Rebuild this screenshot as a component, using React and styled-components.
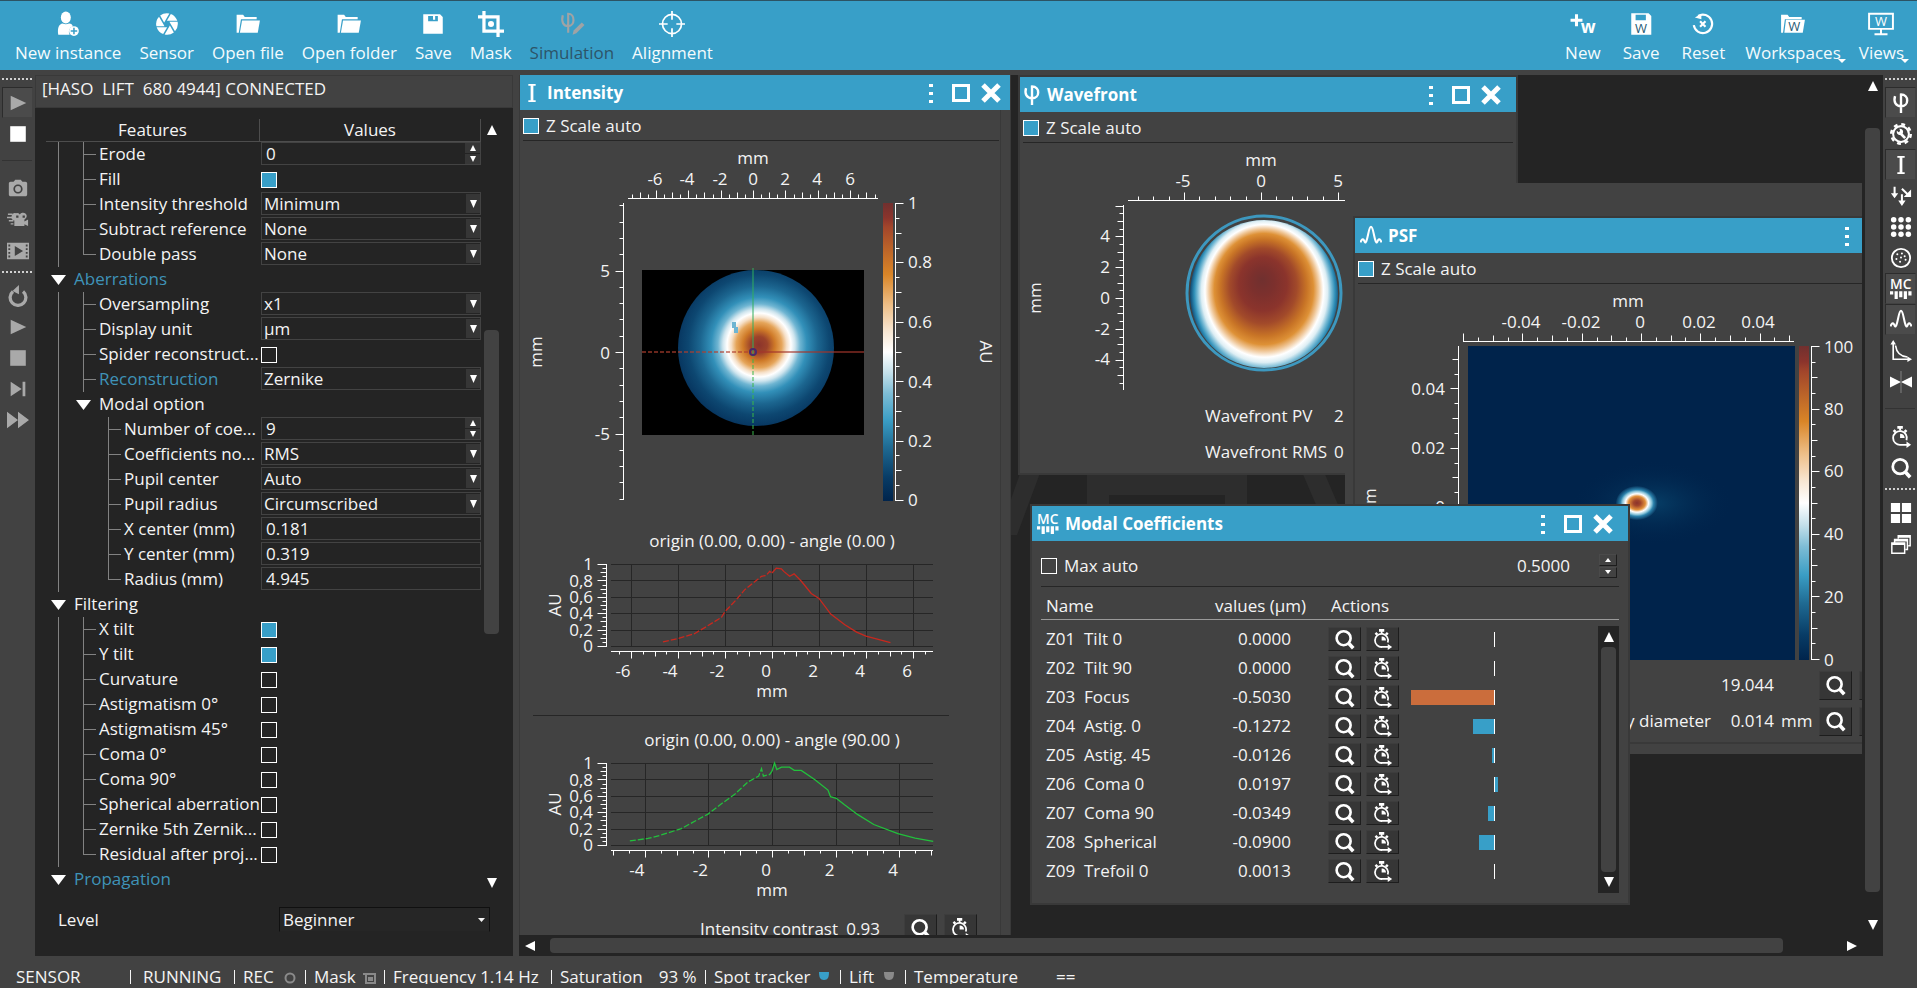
import React from "react";
import styled, { createGlobalStyle, css } from "styled-components";
import { MdCamera, MdPhotoCamera } from "react-icons/md";

const blue = "#389fc8";
const panel = "#424242";
const dark = "#242424";
const edge = "#393939";
const grey = "#a9a9a9";

const Global = createGlobalStyle`
  *, *::before, *::after { box-sizing: border-box; }
  body { margin: 0; background: ${panel}; color: #f4f4f4; overflow: hidden; }
  body, button, input, select { font: 17px/22px "Open Sans", "Noto Sans", sans-serif; }
  svg text { font: 17px "Open Sans", "Noto Sans", sans-serif; fill: #f4f4f4; }
`;

/* ---------- shell ---------- */

const Shell = styled.div`
  display: flex;
  flex-direction: column;
  height: 100vh;
  background: ${panel};
`;

const TopBar = styled.header`
  display: flex;
  justify-content: space-between;
  height: 70px;
  padding: 0 4px 0 6px;
  background: ${blue};
  border-top: 1px solid #2c5364;
`;

const ToolGroup = styled.div`
  display: flex;
`;

const ToolButton = styled.button`
  position: relative;
  display: flex;
  flex-direction: column;
  align-items: center;
  gap: 5px;
  padding: 10px ${(p) => (p.$wide ? 11 : 9)}px 0;
  border: 0;
  background: none;
  color: #f4fbfd;
  white-space: nowrap;

  svg { width: 26px; height: 26px; color: #fff; }
  svg text { fill: currentColor; }
  &:disabled { color: #2d5468; }
  &:disabled svg { color: #9fa3a5; }
`;

const MenuMark = styled.span`
  position: absolute;
  right: 4px;
  bottom: 7px;
  border: 4px solid transparent;
  border-top-color: #fff;
  border-bottom: 0;
`;

const Main = styled.main`
  display: flex;
  flex: 1;
  min-height: 0;
  padding-top: 5px;
`;

const SideBar = styled.nav`
  display: flex;
  flex-direction: column;
  flex: none;
  width: ${(p) => p.$width}px;
  padding-left: 2px;
`;

const Dots = styled.div`
  flex: none;
  height: ${(p) => (p.$top ? 12 : 14)}px;
  width: 31px;
  background: repeating-linear-gradient(90deg, #d0d0d0 0 2px, transparent 2px 4px) 0 ${(p) => (p.$top ? 3 : 5)}px / 100% 2px no-repeat;
`;

const SideRule = styled.hr`
  flex: none;
  width: 30px;
  margin: 11px 0 12px;
  border: 0;
  border-top: 1px solid #333;
`;

const SideButton = styled.button`
  display: grid;
  place-items: center;
  flex: none;
  width: 31px;
  height: 31px;
  padding: 0;
  border: 1px solid transparent;
  background: none;
  color: ${(p) => p.$color || "#fff"};
  ${(p) =>
    p.$pressed &&
    css`
      border-color: #2c2c2c #424242 #424242 #2c2c2c;
      background: #4b4b4b;
    `}
  svg { width: 22px; height: 22px; }
  svg text { fill: currentColor; }
`;

/* ---------- shared controls ---------- */

const Check = styled.input.attrs({ type: "checkbox" })`
  appearance: none;
  flex: none;
  width: 16px;
  height: 16px;
  margin: 0;
  border: 1px solid #fff;
  &:checked { background: ${blue}; }
`;

const ScrollTrack = styled.div`
  display: flex;
  flex-direction: ${(p) => (p.$row ? "row" : "column")};
  justify-content: space-between;
  align-items: center;
  flex: none;
  ${(p) => (p.$row ? "height: 21px;" : "width: 21px;")}
  background: ${dark};
`;

const Thumb = styled.div`
  border-radius: 4px;
  background: ${panel};
  ${(p) => (p.$row ? "height: 15px;" : "width: 15px;")}
  flex: ${(p) => p.$size} 1 0;
`;

const Slack = styled.div`
  flex: ${(p) => p.$size} 1 0;
`;

const ArrowButton = styled.button`
  display: grid;
  place-items: center;
  flex: none;
  width: 21px;
  height: 21px;
  padding: 0;
  border: 0;
  background: none;
  color: #fff;
`;

const turns = { up: 0, right: 90, down: 180, left: 270 };
const Triangle = ({ dir = "down", w = 10, h = 10 }) => (
  <svg width={w} height={h} viewBox="0 0 10 10" preserveAspectRatio="none" aria-hidden="true">
    <path d="M5 0 10 10H0z" fill="currentColor" transform={`rotate(${turns[dir]} 5 5)`} />
  </svg>
);

const SmallButton = styled.button`
  display: inline-grid;
  place-items: center;
  flex: none;
  width: 33px;
  height: ${(p) => p.$h || 29}px;
  padding: 0;
  border: 1px solid;
  border-color: #3d3d3d #1d1d1d #1d1d1d #3d3d3d;
  background: #363636;
  color: #fff;
  svg { width: 21px; height: 21px; }
`;

/* ---------- feature panel ---------- */

const FeaturePanel = styled.section`
  display: flex;
  flex-direction: column;
  flex: none;
  width: 478px;
  margin-right: 6px;
  background: ${dark};
`;

const PanelTitle = styled.h1`
  height: 33px;
  margin: 0;
  padding: 2px 6px;
  border: 1px solid ${edge};
  background: ${panel};
  font-size: 17px;
  font-weight: 400;
  white-space: pre;
`;

const PanelBody = styled.div`
  display: flex;
  flex: none;
  padding: 11px 11px 0 11px;
  height: 785px;
`;

const Features = styled.div`
  flex: 1;
  overflow: hidden;
`;

const FeatureHead = styled.div`
  display: grid;
  grid-template-columns: 214px minmax(0, 1fr);
  height: 23px;
  border-bottom: 1px solid #4d4d4d;
  text-align: center;
  span { border-right: 1px solid #4d4d4d; }
`;

const FeatureRow = styled.div`
  display: grid;
  grid-template-columns: 215px minmax(0, 1fr);
  align-items: center;
  height: 25px;
`;

const Branch = styled.div`
  display: flex;
  height: 25px;
  color: ${(p) => (p.$accent ? "#3f93b8" : "inherit")};
  white-space: nowrap;
  label, b { font-weight: 400; line-height: 24px; margin-left: 3px; }
`;

const Guide = styled.span`
  position: relative;
  flex: none;
  width: 25px;
  &::before {
    content: "";
    position: absolute;
    left: 12px;
    top: 0;
    width: 1px;
    height: ${(p) => (p.$kind === "end" ? 13 : 25)}px;
    background: #828282;
  }
  &::after {
    content: "";
    position: absolute;
    left: 12px;
    top: 12px;
    width: ${(p) => (p.$kind === "line" ? 0 : 13)}px;
    height: 1px;
    background: #828282;
  }
`;

const Toggle = styled.button`
  display: grid;
  place-items: center;
  flex: none;
  width: 25px;
  padding: 0;
  border: 0;
  background: none;
  color: #fff;
`;

const Field = styled.div`
  position: relative;
  display: flex;
  height: 23px;
  border: 1px solid #434343;
  align-self: start;
  input, select {
    appearance: none;
    flex: 1;
    min-width: 0;
    height: 21px;
    padding: 0 ${(p) => (p.$select ? 2 : 4)}px;
    border: 0;
    background: none;
    color: inherit;
    outline: 0;
  }
`;

const DropMark = styled.span`
  position: absolute;
  right: 0;
  top: 1px;
  display: grid;
  place-items: center;
  width: 14px;
  height: 19px;
  background: #363636;
  color: #fff;
  pointer-events: none;
`;

const Spin = styled.span`
  display: flex;
  flex-direction: column;
  flex: none;
  gap: 1px;
  width: ${(p) => p.$w || 15}px;
  button {
    flex: 1;
    display: grid;
    place-items: center;
    padding: 0;
    border: 0;
    background: #363636;
    color: #fff;
    ${(p) => p.$raised && "border: 1px solid; border-color: #4a4a4a #1d1d1d #1d1d1d #4a4a4a; background: #424242;"}
  }
`;

const LevelRow = styled.div`
  display: flex;
  justify-content: space-between;
  align-items: center;
  margin-top: 14px;
  padding: 0 23px;
`;

const LevelBox = styled.div`
  position: relative;
  width: 211px;
  select {
    appearance: none;
    width: 100%;
    height: 25px;
    padding: 0 3px;
    border: 1px solid #101010;
    border-bottom-color: ${dark};
    border-radius: 0;
    background: #262626;
    color: inherit;
    outline: 0;
  }
  svg { position: absolute; right: 5px; top: 11px; pointer-events: none; }
`;

const rows = [
  { t: "Erode", g: "lb", k: "spin", v: "0" },
  { t: "Fill", g: "lb", k: "check", v: true },
  { t: "Intensity threshold", g: "lb", k: "select", v: "Minimum" },
  { t: "Subtract reference", g: "lb", k: "select", v: "None" },
  { t: "Double pass", g: "le", k: "select", v: "None" },
  { t: "Aberrations", g: "t", accent: true },
  { t: "Oversampling", g: "lb", k: "select", v: "x1" },
  { t: "Display unit", g: "lb", k: "select", v: "µm" },
  { t: "Spider reconstruct...", g: "lb", k: "check", v: false },
  { t: "Reconstruction", g: "lb", k: "select", v: "Zernike", accent: true },
  { t: "Modal option", g: "lt" },
  { t: "Number of coe...", g: "lsb", k: "spin", v: "9" },
  { t: "Coefficients no...", g: "lsb", k: "select", v: "RMS" },
  { t: "Pupil center", g: "lsb", k: "select", v: "Auto" },
  { t: "Pupil radius", g: "lsb", k: "select", v: "Circumscribed" },
  { t: "X center (mm)", g: "lsb", k: "text", v: "0.181" },
  { t: "Y center (mm)", g: "lsb", k: "text", v: "0.319" },
  { t: "Radius (mm)", g: "lse", k: "text", v: "4.945" },
  { t: "Filtering", g: "t" },
  { t: "X tilt", g: "lb", k: "check", v: true },
  { t: "Y tilt", g: "lb", k: "check", v: true },
  { t: "Curvature", g: "lb", k: "check", v: false },
  { t: "Astigmatism 0°", g: "lb", k: "check", v: false },
  { t: "Astigmatism 45°", g: "lb", k: "check", v: false },
  { t: "Coma 0°", g: "lb", k: "check", v: false },
  { t: "Coma 90°", g: "lb", k: "check", v: false },
  { t: "Spherical aberration", g: "lb", k: "check", v: false },
  { t: "Zernike 5th Zernik...", g: "lb", k: "check", v: false },
  { t: "Residual after proj...", g: "le", k: "check", v: false },
  { t: "Propagation", g: "t", accent: true },
];

const Blank = styled.span`
  flex: none;
  width: 25px;
`;

function guide(c, i) {
  if (c === "l") return <Guide key={i} $kind="line" />;
  if (c === "b") return <Guide key={i} $kind="branch" />;
  if (c === "e") return <Guide key={i} $kind="end" />;
  if (c === "s") return <Blank key={i} />;
  return (
    <Toggle key={i} aria-label="Collapse">
      <Triangle w={15} h={10} />
    </Toggle>
  );
}

function Value({ row, id }) {
  if (row.k === "check") return <Check id={id} defaultChecked={row.v} />;
  if (row.k === "select")
    return (
      <Field $select>
        <select id={id} defaultValue={row.v}>
          <option>{row.v}</option>
        </select>
        <DropMark>
          <Triangle w={7} h={8} />
        </DropMark>
      </Field>
    );
  return (
    <Field>
      <input id={id} type="text" defaultValue={row.v} />
      {row.k === "spin" && (
        <Spin>
          <button aria-label="Increase"><Triangle dir="up" w={6} h={6} /></button>
          <button aria-label="Decrease"><Triangle w={6} h={6} /></button>
        </Spin>
      )}
    </Field>
  );
}

function FeatureTree() {
  return (
    <FeaturePanel>
      <PanelTitle>{"[HASO  LIFT  680 4944] CONNECTED"}</PanelTitle>
      <PanelBody>
        <Features>
          <FeatureHead>
            <span>Features</span>
            <span>Values</span>
          </FeatureHead>
          {rows.map((r, i) => {
            const id = `feature-${i}`;
            return (
              <FeatureRow key={r.t}>
                <Branch $accent={r.accent}>
                  {[...r.g].map(guide)}
                  {r.k ? <label htmlFor={id}>{r.t}</label> : <b>{r.t}</b>}
                </Branch>
                {r.k && <Value row={r} id={id} />}
              </FeatureRow>
            );
          })}
        </Features>
        <ScrollTrack>
          <ArrowButton aria-label="Scroll up"><Triangle dir="up" /></ArrowButton>
          <Slack $size={190} />
          <Thumb $size={303} />
          <Slack $size={238} />
          <ArrowButton aria-label="Scroll down"><Triangle /></ArrowButton>
        </ScrollTrack>
      </PanelBody>
      <LevelRow>
        <label htmlFor="level">Level</label>
        <LevelBox>
          <select id="level" defaultValue="Beginner">
            <option>Beginner</option>
          </select>
          <Triangle w={7} h={4} />
        </LevelBox>
      </LevelRow>
    </FeaturePanel>
  );
}

/* ---------- icons ---------- */

const Svg = ({ children, box = "0 0 24 24", ...rest }) => (
  <svg viewBox={box} fill="none" stroke="currentColor" strokeWidth="2" aria-hidden="true" {...rest}>
    {children}
  </svg>
);
const solid = { fill: "currentColor", stroke: "none" };

const UserAdd = () => (
  <Svg>
    <g {...solid}>
      <ellipse cx="10" cy="6" rx="4.6" ry="5.6" />
      <path d="M3 22c-1-7 1-10 4-10.500 2 1 4 1 6 0 2 .3 3 1 3.500 2.500a5.500 5.500 0 0 0-3 8z" />
      <circle cx="17.500" cy="18.500" r="4.500" />
    </g>
    <path d="M17.500 15.500v6M14.500 18.500h6" stroke={blue} strokeWidth="1.400" />
  </Svg>
);
const Folder = () => (
  <Svg fill="currentColor" stroke="none">
    <path d="M1.500 3.500h6l1.500 2H20v2H5.500L3.500 20h-2z" />
    <path d="M6.500 8.800H23L21 20H4.500z" />
  </Svg>
);
const Floppy = () => (
  <Svg fill="currentColor" stroke="none">
    <path fillRule="evenodd" d="M3 3h15.500L21 5.500V21H3zM7.500 4.500v5h9v-5h-2.500v3.500h-2v-3.500z" />
  </Svg>
);
const CropMask = () => (
  <Svg strokeWidth="3">
    <path d="M5.500 0v18.500H24M0 5.500h18.500V24" />
    <circle cx="12" cy="12" r="2.800" {...solid} />
  </Svg>
);
const PhiEdit = () => (
  <Svg strokeWidth="2">
    <path d="M3.500 4C2 10 4 14 8.500 14 15 14 15 2.500 8.500 2.500V20" />
    <path d="M12.500 22l1-4 7.500-7.500 2.500 2.500-7.500 7.500z" {...solid} />
  </Svg>
);
const Target = () => (
  <Svg strokeWidth="1.600">
    <circle cx="12" cy="12" r="8.800" />
    <path d="M12 0v8M12 16v8M0 12h8M16 12h8" />
  </Svg>
);
const NewW = () => (
  <Svg>
    <path d="M6 3v11M0.500 8.500h11" strokeWidth="2.800" />
    <text x="10" y="20" stroke="none" style={{ font: "bold 16px 'Open Sans', sans-serif" }}>w</text>
  </Svg>
);
const SaveW = () => (
  <Svg fill="currentColor" stroke="none">
    <path fillRule="evenodd" d="M3 2h16l2.500 2.500V22H3zM7 3.500v5h9.500v-5z" />
    <text x="6.500" y="20" style={{ font: "12px 'Open Sans', sans-serif", fill: "#1f5a74" }}>W</text>
  </Svg>
);
const ResetIcon = () => (
  <Svg>
    <path d="M7.500 4.600a8.500 8.500 0 1 1-4 8.400M9.300 9.500l5 5M14.300 9.500l-5 5" />
    <path d="M4.500 6l6-3.500v5z" {...solid} />
  </Svg>
);
const FolderW = () => (
  <Svg fill="currentColor" stroke="none">
    <path d="M1 3.500h6l1.500 2H20v2H4.500L2.800 20H1z" />
    <path d="M5.500 8H23l-2 12H4z" />
    <text x="7.500" y="18.500" style={{ font: "12px 'Open Sans', sans-serif", fill: "#1f5a74" }}>W</text>
  </Svg>
);
const Monitor = () => (
  <Svg strokeWidth="1.800">
    <path d="M1 2.500h22v14H1zM12 16.500v5M6 21.500h12" />
    <text x="6.500" y="14" stroke="none" style={{ font: "12px 'Open Sans', sans-serif" }}>W</text>
  </Svg>
);

const Play = () => <Svg {...solid}><path d="M4 4l17 8-17 8z" /></Svg>;
const Stop = () => <Svg {...solid}><path d="M3.500 3.500h17v17h-17z" /></Svg>;
const StepNext = () => <Svg {...solid}><path d="M4 4l12 8-12 8zM17 4h3v16h-3z" /></Svg>;
const Fast = () => <Svg {...solid}><path d="M0 3l12 9-12 9zM12 3l12 9-12 9z" /></Svg>;
const Cine = () => (
  <Svg {...solid}>
    <path fillRule="evenodd" d="M10 4.500a4 3.600 0 0 1 4 1.500 4 3.600 0 1 1 6 4.500l-1 1v2l4-2v7l-4-2v2H8v-6a4 4 0 0 1 2-8zm0 2.500v2.500h2.500V7zm7 0v2.500h2.500V7z" />
    <path d="M1 5h5v1.500H1zM0 8.500h6V10H0zM2 12h5v1.500H2zM4 15.500h3V17H4z" />
  </Svg>
);
const Film = () => (
  <Svg {...solid}>
    <path fillRule="evenodd" d="M0 3h24v18H0zM1.500 5v2h2V5zm0 4v2h2V9zm0 4v2h2v-2zm0 4v2h2v-2zm19-12v2h2V5zm0 4v2h2V9zm0 4v2h2v-2zm0 4v2h2v-2zM8.500 6.500v11l9-5.500z" />
  </Svg>
);
const Reload = () => (
  <Svg strokeWidth="3.600">
    <path d="M17.500 7a8.600 8.600 0 1 1-11 0" />
    <path d="M6 6.500L13 0v10z" {...solid} />
  </Svg>
);
const Phi = () => <Svg strokeWidth="2.600"><path d="M5.500 4.500C3.500 11 6.500 15.500 12 15.500 21 15.500 21 2.800 12 2.800V23" /></Svg>;
const GearWrench = () => (
  <Svg>
    <circle cx="12" cy="12" r="8.600" strokeWidth="2.200" />
    <circle cx="12" cy="12" r="10.600" strokeWidth="2.800" strokeDasharray="4.160 4.160" />
    <path d="M11 11l5.500 5.500" strokeWidth="3" />
    <path d="M7.500 8.500a3.500 3.500 0 1 0 2.800-2.300l.7 2.600-1.500 1.400z" {...solid} />
  </Svg>
);
const IBeam = () => <Svg strokeWidth="3"><path d="M12 3v18" /><path d="M8 3.200h8M8 20.800h8" strokeWidth="2" /></Svg>;
const Arrows = () => (
  <Svg strokeWidth="2.200">
    <path d="M5 2v10M13 10v8M13 4l7 7" />
    <path d="M1 9h8l-4 5.500zM9 17h8l-4 6zM23 5v8h-8z" {...solid} />
  </Svg>
);
const DotGrid = () => (
  <Svg {...solid}>
    {[4, 12, 20].map((x) => [4, 12, 20].map((y) => <circle key={`${x}-${y}`} cx={x} cy={y} r="3" />))}
  </Svg>
);
const Spots = () => (
  <Svg>
    <circle cx="12" cy="12" r="10" />
    <g {...solid}>
      {[[8, 8], [13, 7], [16, 10], [7, 13], [11, 16], [17, 14], [12, 11.5]].map(([x, y]) => (
        <circle key={`${x}-${y}`} cx={x} cy={y} r="1.100" />
      ))}
    </g>
  </Svg>
);
const McIcon = () => (
  <Svg {...solid}>
    <text x="0" y="12" style={{ font: "600 15px 'Open Sans', sans-serif" }}>MC</text>
    <path d="M0 14.500h3.500V18H0zM5 14.500h3.500V23H5zM10 14.500h3.500V21H10zM15 14.500h3.500V23H15zM20 14.500h3.500V19H20z" />
  </Svg>
);
const Peaks = () => (
  <Svg strokeWidth="2.200" strokeLinejoin="round">
    <path d="M.5 19c1-3 3-5 4-2 .5 2 1.500 3 2.300 1C9 13 9.500 2 12 2s3 11 5.200 16c.8 2 1.800 1 2.300-1 1-3 3-1 4 2" />
  </Svg>
);
const Decay = () => (
  <Svg strokeWidth="1.800">
    <path d="M3.500 4v17H20M6 6c1 7 4 12 13 12.500" />
    <path d="M.5 5l3-5 3 5zM19 18l5 3-5 3z" {...solid} />
  </Svg>
);
const Bowtie = () => (
  <Svg>
    <path d="M0 6l12 6-12 6zM24 6l-12 6 12 6z" {...solid} />
    <path d="M12 0v24" stroke="#888" strokeWidth="1" />
  </Svg>
);
const Stopwatch = () => (
  <Svg>
    <path d="M12 20.500A7.500 7.500 0 1 1 18 15.500M10 20.500h9" />
    <path d="M8 0h6v3h-2v2h-2V3H8zM3 5.500L5 3.500 7 5.500 5 7.500zM17 3.500l2 2-2 2-2-2zM11 8.500V13h5a4.500 4.500 0 0 0-5-4.500zM18 17l5 3.500-5 3.500z" {...solid} />
  </Svg>
);
const Magnifier = () => (
  <Svg strokeWidth="3">
    <circle cx="11" cy="10.500" r="8" />
    <path d="M16.500 16l5.500 6" strokeWidth="4" />
  </Svg>
);
const Tiles = () => <Svg {...solid}><path d="M1 1h10v10H1zM13 1h10v10H13zM1 13h10v10H1zM13 13h10v10H13z" /></Svg>;
const Stack = () => (
  <Svg strokeWidth="1.600">
    <path d="M2 11h14v11H2zM5 10V7h14v11h-2M9 6V3h13v11h-2" />
    <path d="M2 12h14M5 8h14M9 4h13" strokeWidth="2.400" />
  </Svg>
);

/* ---------- windows ---------- */

const Desk = styled.div`
  display: flex;
  flex-direction: column;
  flex: 1;
  min-width: 0;
  background: ${dark};
`;

const DeskRow = styled.div`
  display: flex;
  flex: 1;
  min-height: 0;
`;

const Viewport = styled.div`
  position: relative;
  flex: 1;
  min-width: 0;
  overflow: hidden;
`;

const Watermark = styled.svg`
  position: absolute;
  left: 490px;
  top: 370px;
  width: 400px;
  height: 90px;
`;

const Win = styled.section`
  position: absolute;
  left: ${(p) => p.$x}px;
  top: ${(p) => p.$y}px;
  width: ${(p) => p.$w}px;
  border: ${(p) => (p.$flush ? 1 : 2)}px solid ${edge};
  border-top-width: ${(p) => (p.$flush ? 0 : 2)}px;
  background: ${panel};
`;

const Frame = styled.div`
  position: absolute;
  left: ${(p) => p.$x}px;
  top: ${(p) => p.$y}px;
  width: ${(p) => p.$w}px;
  padding: 33px 8px 10px;
  background: ${panel};
`;

const FrameInner = styled.section`
  border: 2px solid ${edge};
`;

const WinTitle = styled.header`
  display: flex;
  align-items: center;
  gap: ${(p) => (p.$wideIcon ? 6 : 4)}px;
  height: 35px;
  padding: 0 ${(p) => (p.$tight ? 9 : 15)}px 0 ${(p) => (p.$wideIcon ? 5 : 1)}px;
  background: ${blue};
  color: #fff;
  h2 {
    flex: 1;
    margin: 0;
    font-size: 17px;
    line-height: 22px;
    font-weight: 700;
  }
  > svg { width: 22px; height: 22px; }
  > svg text { fill: #fff; }
`;

const WinButtons = styled.div`
  display: flex;
  gap: 10px;
`;

const WinButton = styled.button`
  display: grid;
  place-items: center;
  width: 20px;
  height: 20px;
  padding: 0;
  border: 0;
  background: none;
  color: #fff;
`;

function TitleBar({ icon, title, tight, wideIcon }) {
  return (
    <WinTitle $tight={tight} $wideIcon={wideIcon}>
      {icon}
      <h2>{title}</h2>
      <WinButtons>
        <WinButton aria-label="Menu">
          <svg width="4" height="20" fill="currentColor"><path d="M0 1h4v3H0zM0 9h4v3H0zM0 17h4v3H0z" /></svg>
        </WinButton>
        <WinButton aria-label="Maximize">
          <svg width="18" height="18" fill="none" stroke="currentColor" strokeWidth="3"><path d="M1.500 1.500h15v15h-15z" /></svg>
        </WinButton>
        <WinButton aria-label="Close">
          <svg width="20" height="20" fill="none" stroke="currentColor" strokeWidth="5"><path d="M2 2l16 16M18 2L2 18" /></svg>
        </WinButton>
      </WinButtons>
    </WinTitle>
  );
}

const WinBody = styled.div`
  padding: 0 3px ${(p) => p.$bottom || 0}px;
  ${(p) => p.$rail && "margin-right: 9px; border-right: 1px solid #393939; padding-right: 1px;"}
  > svg { display: block; }
`;

const AutoRow = styled.label`
  display: flex;
  align-items: center;
  gap: 7px;
  height: 31px;
  padding-top: 1px;
  border-bottom: 1px solid #262626;
`;

const AutoScale = () => (
  <AutoRow>
    <Check defaultChecked /> Z Scale auto
  </AutoRow>
);

const ChartBlock = styled.div`
  margin: 0 50px 0 10px;
  svg { display: block; }
  & + & { border-top: 1px solid #262626; padding-top: 4px; }
`;

/* ---------- plots ---------- */

const stops = [
  [0, "#00244c"], [0.08, "#083c66"], [0.18, "#1f6a92"], [0.27, "#3a9dc4"], [0.36, "#7dbcd5"],
  [0.43, "#c4e0ea"], [0.5, "#ffffff"], [0.57, "#f7e6d2"], [0.66, "#edbd85"], [0.76, "#d98527"],
  [0.84, "#bd6629"], [0.92, "#a1452b"], [0.95, "#8b342c"], [1, "#70302f"],
];

const Ramp = ({ id }) => (
  <linearGradient id={id} x1="0" y1="1" x2="0" y2="0">
    {stops.map(([o, c]) => <stop key={o} offset={o} stopColor={c} />)}
  </linearGradient>
);

const range = (from, to, step) => {
  const out = [];
  for (let i = Math.ceil(from / step - 1e-6); i * step <= to + step * 1e-6; i++) out.push(i);
  return out;
};

/* Ruler along x or y; side is the direction in which the ticks point. */
function Ruler({ axis, at, start, end, zero, scale, step, mid, major, side, sizes = [4, 6, 8] }) {
  const sgn = axis === "x" ? 1 : -1;
  const a = (start - zero) / scale;
  const b = (end - zero) / scale;
  const lo = Math.min(a * sgn, b * sgn);
  const hi = Math.max(a * sgn, b * sgn);
  let d = axis === "x" ? `M${start} ${at}H${end}` : `M${at} ${start}V${end}`;
  range(lo, hi, step).forEach((i) => {
    const p = Math.round(zero + sgn * i * step * scale) + 0.5;
    const len = (i % major === 0 ? sizes[2] : i % mid === 0 ? sizes[1] : sizes[0]) * side;
    d += axis === "x" ? `M${p} ${at}v${len}` : `M${at} ${p}h${len}`;
  });
  return <path d={d} stroke="#fff" fill="none" />;
}

const Labels = ({ items, x, y, anchor = "middle" }) =>
  items.map(([text, pos]) => (
    <text key={text} x={x === undefined ? pos : x} y={(y === undefined ? pos : y) + 6} textAnchor={anchor}>
      {text}
    </text>
  ));

const Turned = ({ x, y, angle = -90, children }) => (
  <text transform={`translate(${x} ${y}) rotate(${angle})`} y="5" textAnchor="middle">{children}</text>
);

function IntensityMap() {
  return (
    <svg width="475" height="380" role="img" aria-label="Intensity map">
      <defs>
        <Ramp id="ramp-int" />
        <radialGradient id="beam" gradientUnits="userSpaceOnUse" cx="236" cy="204" r="84">
          <stop offset="0" stopColor="#8b342c" />
          <stop offset="0.1" stopColor="#9c432a" />
          <stop offset="0.19" stopColor="#cf7a28" />
          <stop offset="0.27" stopColor="#e5a55a" />
          <stop offset="0.33" stopColor="#f6e0c8" />
          <stop offset="0.38" stopColor="#ffffff" />
          <stop offset="0.43" stopColor="#cfe5ee" />
          <stop offset="0.49" stopColor="#6fb5d2" />
          <stop offset="0.57" stopColor="#3290b9" />
          <stop offset="0.7" stopColor="#1c6690" />
          <stop offset="0.84" stopColor="#0d4771" />
          <stop offset="1" stopColor="#06335d" />
        </radialGradient>
      </defs>
      <text x="230" y="23" textAnchor="middle">mm</text>
      <Labels y={38} items={[["-6", 132], ["-4", 164], ["-2", 197], ["0", 230], ["2", 262], ["4", 294], ["6", 327]]} />
      <Ruler axis="x" at={57.5} start={105} end={355} zero={230} scale={16.2} step={0.5} mid={2} major={4} side={-1} />
      <Labels x={87} anchor="end" items={[["5", 130], ["0", 212], ["-5", 293]]} />
      <Ruler axis="y" at={100.5} start={62} end={359} zero={211} scale={16.3} step={1} mid={5} major={5} side={-1} />
      <rect x="119" y="129" width="222" height="165" fill="#000" />
      <circle cx="233" cy="207" r="78" fill="url(#beam)" />
      <path d="M209 181h4v5h2v6h-4v-5h-2z" fill="#6fb5d2" />
      <g strokeWidth="2" fill="none">
        <path d="M230 127v85" stroke="#2fae5e" opacity=".5" />
        <path d="M230 212v82" stroke="#39b54a" strokeDasharray="4 2" opacity=".5" />
        <path d="M231 211h110" stroke="#a3362c" opacity=".6" />
        <path d="M119 211h110" stroke="#b0402e" strokeDasharray="4 2" opacity=".6" />
        <circle cx="230" cy="211" r="3" stroke="#4a2a6a" />
      </g>
      <rect x="360" y="62" width="10" height="298" fill="url(#ramp-int)" />
      <Ruler axis="y" at={372.5} start={62} end={360} zero={359} scale={297} step={0.05} mid={2} major={4} side={1} />
      <Labels x={385} anchor="start" items={[["1", 62], ["0.8", 121], ["0.6", 181], ["0.4", 241], ["0.2", 300], ["0", 359]]} />
      <Turned x={14} y={211}>mm</Turned>
      <Turned x={462} y={211} angle={90}>AU</Turned>
    </svg>
  );
}

const redCurve = [
  [-4.64, 0.05], [-4, 0.09], [-3.3, 0.15], [-2.8, 0.235], [-2.15, 0.35], [-2, 0.42], [-1.5, 0.57], [-1.15, 0.69],
  [-0.67, 0.8], [-0.45, 0.85], [-0.25, 0.86], [-0.1, 0.91], [0, 0.89], [0.18, 0.95], [0.4, 0.94], [0.5, 0.91],
  [0.75, 0.85], [0.94, 0.88], [1.25, 0.79], [1.67, 0.64], [2, 0.58], [2.5, 0.39], [3.1, 0.26], [3.6, 0.17],
  [4, 0.12], [5.04, 0.04],
];
const greenCurve = [
  [-4.47, 0.05], [-3.9, 0.08], [-3.5, 0.12], [-2.85, 0.2], [-2.43, 0.29], [-2, 0.38], [-1.6, 0.5], [-1.17, 0.62],
  [-0.75, 0.77], [-0.42, 0.84], [-0.33, 0.93], [-0.27, 0.84], [-0.07, 0.86], [0, 0.9], [0.08, 1], [0.15, 0.92],
  [0.3, 0.95], [0.55, 0.95], [0.7, 0.91], [0.92, 0.91], [1.34, 0.8], [1.76, 0.67], [1.84, 0.59], [2.02, 0.57],
  [2.28, 0.49], [2.7, 0.37], [3.2, 0.25], [3.96, 0.14], [4.5, 0.085], [5.07, 0.045],
];

function Profile({ title, color, data, scale, ticks }) {
  const zero = 239;
  const line = (pts) => "M" + pts.map(([x, y]) => `${zero + x * scale} ${125 - y * 82}`).join("L");
  let grid = "";
  ticks.forEach((t) => (grid += `M${Math.round(zero + t * scale) + 0.5} 43V125`));
  for (let i = 0; i <= 5; i++) grid += `M78 ${Math.round(43 + i * 16.4) + 0.5}H400`;
  return (
    <svg width="414" height="194" role="img" aria-label={title}>
      <text x="239" y="26" textAnchor="middle">{title}</text>
      <path d={grid} stroke="#262626" />
      <path d={line(data.filter((p) => p[0] <= 0))} stroke={color} fill="none" strokeDasharray="6 2" strokeWidth="1.300" />
      <path d={line(data.filter((p) => p[0] >= 0))} stroke={color} fill="none" strokeWidth="1.300" />
      <Ruler axis="y" at={73.5} start={43} end={126} zero={125} scale={82} step={0.05} mid={2} major={4} side={-1} sizes={[4, 6, 9]} />
      <Labels x={60} anchor="end" items={[["1", 43], ["0,8", 60], ["0,6", 76], ["0,4", 92], ["0,2", 109], ["0", 125]]} />
      <Ruler axis="x" at={130.5} start={78} end={400} zero={239} scale={scale} step={0.5} mid={2} major={4} side={1} sizes={[3, 5, 7]} />
      <Labels y={150} items={ticks.map((t) => [String(t), zero + t * scale - (t < 0 ? 8 : 6)])} />
      <text x="239" y="176" textAnchor="middle">mm</text>
      <Turned x={23} y={84}>AU</Turned>
    </svg>
  );
}

function WavefrontMap() {
  return (
    <svg width="490" height="255" role="img" aria-label="Wavefront map">
      <defs>
        <radialGradient id="wave" gradientUnits="userSpaceOnUse" cx="0" cy="0" r="80" fx="-3" fy="-14" gradientTransform="translate(242 152) scale(1 1.120)">
          <stop offset="0" stopColor="#70302f" />
          <stop offset="0.15" stopColor="#7c302d" />
          <stop offset="0.3" stopColor="#8b342c" />
          <stop offset="0.42" stopColor="#a24a2a" />
          <stop offset="0.54" stopColor="#c87426" />
          <stop offset="0.62" stopColor="#de9136" />
          <stop offset="0.68" stopColor="#efc595" />
          <stop offset="0.74" stopColor="#ffffff" />
          <stop offset="0.79" stopColor="#ddeef4" />
          <stop offset="0.84" stopColor="#75b9d4" />
          <stop offset="0.88" stopColor="#2f8fb8" />
          <stop offset="0.95" stopColor="#07355f" />
        </radialGradient>
      </defs>
      <text x="238" y="23" textAnchor="middle">mm</text>
      <Labels y={38} items={[["-5", 160], ["0", 238], ["5", 315]]} />
      <Ruler axis="x" at={57.5} start={105} end={372} zero={238} scale={15.4} step={1} mid={5} major={5} side={-1} />
      <Labels x={87} anchor="end" items={[["4", 93], ["2", 124], ["0", 155], ["-2", 186], ["-4", 216]]} />
      <Ruler axis="y" at={100.5} start={62} end={247} zero={155} scale={15.4} step={0.5} mid={2} major={4} side={-1} />
      <circle cx="241" cy="151" r="74" fill="url(#wave)" />
      <circle cx="241" cy="150" r="77" fill="none" stroke="#3d98bf" strokeWidth="3" />
      <Turned x={13} y={155}>mm</Turned>
    </svg>
  );
}

function PsfMap() {
  return (
    <svg width="561" height="383" role="img" aria-label="Point spread function">
      <defs>
        <Ramp id="ramp-psf" />
        <radialGradient id="spot" gradientUnits="userSpaceOnUse" cx="0" cy="0" r="22" gradientTransform="translate(279 219) scale(1 .800)">
          <stop offset="0" stopColor="#8b342c" />
          <stop offset="0.16" stopColor="#a1452b" />
          <stop offset="0.38" stopColor="#e08f3a" />
          <stop offset="0.52" stopColor="#fff" />
          <stop offset="0.66" stopColor="#8cc5da" />
          <stop offset="0.76" stopColor="#2a80aa" />
          <stop offset="1" stopColor="#00244c" />
        </radialGradient>
        <radialGradient id="halo">
          <stop offset="0" stopColor="#0a4a72" stopOpacity=".7" />
          <stop offset="1" stopColor="#00244c" stopOpacity="0" />
        </radialGradient>
      </defs>
      <text x="270" y="23" textAnchor="middle">mm</text>
      <Labels y={38} items={[["-0.04", 163], ["-0.02", 223], ["0", 282], ["0.02", 341], ["0.04", 400]]} />
      <Ruler axis="x" at={57.5} start={105} end={436} zero={283} scale={2965} step={0.005} mid={2} major={4} side={-1} />
      <Labels x={87} anchor="end" items={[["0.04", 105], ["0.02", 164], ["0", 223]]} />
      <Ruler axis="y" at={100.5} start={62} end={376} zero={223} scale={2965} step={0.005} mid={2} major={4} side={-1} />
      <rect x="110" y="62" width="327" height="314" fill="#00234b" />
      <ellipse cx="295" cy="219" rx="80" ry="42" fill="url(#halo)" />
      <ellipse cx="279" cy="219" rx="21" ry="17" fill="url(#spot)" />
      <rect x="441" y="62" width="10" height="314" fill="url(#ramp-psf)" />
      <Ruler axis="y" at={453.5} start={62} end={376} zero={375} scale={3.13} step={5} mid={2} major={4} side={1} />
      <Labels x={466} anchor="start" items={[["100", 63], ["80", 125], ["60", 187], ["40", 250], ["20", 313], ["0", 376]]} />
      <Turned x={13} y={220}>mm</Turned>
    </svg>
  );
}

const Measure = styled.div`
  display: grid;
  grid-template-columns: ${(p) => p.$cols};
  align-items: center;
  height: ${(p) => p.$h || 36}px;
  white-space: nowrap;
`;

const Right = styled.span`
  text-align: right;
`;

const PairButtons = ({ h }) => (
  <>
    <SmallButton $h={h} aria-label="Zoom"><Magnifier /></SmallButton>
    <SmallButton $h={h} aria-label="History"><Stopwatch /></SmallButton>
  </>
);

/* ---------- modal coefficients ---------- */

const ModalBody = styled.div`
  padding: 5px 9px 17px;
`;

const MaxRow = styled.div`
  display: flex;
  align-items: center;
  justify-content: space-between;
  height: 41px;
  padding-right: 2px;
  border-bottom: 1px solid #262626;
  label { display: flex; align-items: center; gap: 7px; }
`;

const MaxValue = styled.span`
  display: flex;
  gap: 29px;
  height: 24px;
  input {
    width: 70px;
    padding: 0;
    border: 0;
    background: none;
    color: inherit;
    text-align: right;
  }
`;

const TableArea = styled.div`
  position: relative;
  padding-top: 7px;
`;

const Coefs = styled.table`
  width: 100%;
  table-layout: fixed;
  border-collapse: collapse;
  th { height: 25px; padding: 0 5px; font-weight: 400; text-align: left; white-space: nowrap; border-bottom: 1px solid #9a9a9a; }
  tbody::before { content: ""; display: block; height: 5px; }
  td { height: 29px; padding: 0 0 0 5px; white-space: nowrap; }
  td:nth-child(2) { padding-left: 0; }
  td:nth-child(3) { text-align: right; padding-right: 35px; }
  td:nth-child(4) { padding-left: 2px; }
`;

const Actions = styled.div`
  display: flex;
  gap: 5px;
`;

const BarCell = styled.div`
  position: relative;
  width: 168px;
  height: 15px;
  overflow: hidden;
  background: linear-gradient(#fff, #fff) 84px 0 / 1px 100% no-repeat;
`;

const Bar = styled.span`
  position: absolute;
  top: 0;
  height: 15px;
  background: ${(p) => (p.$over ? "#cb6d3c" : blue)};
  ${(p) => (p.$neg ? "right: 84px;" : "left: 85px;")}
`;

const TableScroll = styled.div`
  position: absolute;
  right: 0;
  top: 39px;
  bottom: -7px;
  display: flex;
`;

const coefs = [
  ["Z01", "Tilt 0", "0.0000"],
  ["Z02", "Tilt 90", "0.0000"],
  ["Z03", "Focus", "-0.5030"],
  ["Z04", "Astig. 0", "-0.1272"],
  ["Z05", "Astig. 45", "-0.0126"],
  ["Z06", "Coma 0", "0.0197"],
  ["Z07", "Coma 90", "-0.0349"],
  ["Z08", "Spherical", "-0.0900"],
  ["Z09", "Trefoil 0", "0.0013"],
];

function ModalWindow() {
  return (
    <Win $x={511} $y={429} $w={600} aria-label="Modal Coefficients">
      <TitleBar icon={<McIcon />} title="Modal Coefficients" wideIcon />
      <ModalBody>
        <MaxRow>
          <label><Check /> Max auto</label>
          <MaxValue>
            <input type="text" aria-label="Maximum" defaultValue="0.5000" />
            <Spin $w={18} $raised>
              <button aria-label="Increase"><Triangle dir="up" w={6} h={4} /></button>
              <button aria-label="Decrease"><Triangle w={6} h={4} /></button>
            </Spin>
          </MaxValue>
        </MaxRow>
        <TableArea>
          <Coefs>
            <colgroup>
              <col width="43" />
              <col width="126" />
              <col width="116" />
              <col width="79" />
              <col />
            </colgroup>
            <thead>
              <tr>
                <th colSpan="2">Name</th>
                <th>values (µm)</th>
                <th colSpan="2">Actions</th>
              </tr>
            </thead>
            <tbody>
              {coefs.map(([z, name, value]) => {
                const v = parseFloat(value);
                const px = Math.round(Math.abs(v) * 166);
                return (
                  <tr key={z}>
                    <td>{z}</td>
                    <td>{name}</td>
                    <td>{value}</td>
                    <td>
                      <Actions>
                        <PairButtons h={24} />
                      </Actions>
                    </td>
                    <td>
                      <BarCell>
                        {px > 0 && <Bar $neg={v < 0} $over={Math.abs(v) > 0.5} style={{ width: px }} />}
                      </BarCell>
                    </td>
                  </tr>
                );
              })}
            </tbody>
          </Coefs>
          <TableScroll>
            <ScrollTrack>
              <ArrowButton aria-label="Scroll up"><Triangle dir="up" /></ArrowButton>
              <Thumb $size={1} />
              <ArrowButton aria-label="Scroll down"><Triangle /></ArrowButton>
            </ScrollTrack>
          </TableScroll>
        </TableArea>
      </ModalBody>
    </Win>
  );
}

/* ---------- status bar ---------- */

const Status = styled.footer`
  flex: none;
  height: 32px;
`;

const StatusLine = styled.div`
  display: flex;
  height: 28px;
  padding: 10px 16px 0;
  overflow: hidden;
  white-space: pre;
`;

const Cell = styled.span`
  display: flex;
  flex: none;
  gap: ${(p) => p.$gap || 0}px;
  min-width: ${(p) => p.$min || 0}px;
  svg { flex: none; margin-top: 5px; }
`;

const Divider = styled.span`
  flex: none;
  width: 1px;
  height: 14px;
  margin: 4px ${(p) => p.$after || 8}px 0 0;
  background: #f4f4f4;
`;

const Cup = ({ color }) => (
  <svg width="12" height="12"><path d="M1 1h10c0 5-1 8-5 8S1 6 1 1z" fill={color} /></svg>
);

function StatusBar() {
  return (
    <Status>
      <StatusLine>
        <Cell $min={114}>SENSOR</Cell>
        <Divider $after={12} />
        <Cell $min={91}>RUNNING</Cell>
        <Divider />
        <Cell $min={62} $gap={9}>
          REC
          <svg width="14" height="14"><circle cx="7" cy="7" r="4.500" fill="none" stroke="#8a8a8a" strokeWidth="2" /></svg>
        </Cell>
        <Divider />
        <Cell $min={70} $gap={7}>
          Mask
          <svg width="14" height="14" fill="none" stroke="#8a8a8a" strokeWidth="2"><path d="M0 3h12v11M3 3v9h10M6 7h3v2H6z" /></svg>
        </Cell>
        <Divider />
        <Cell $min={158}>Frequency 1.14 Hz</Cell>
        <Divider />
        <Cell $min={145} $gap={16}>
          <span>Saturation</span>
          <span>93 %</span>
        </Cell>
        <Divider />
        <Cell $min={126} $gap={8}>
          Spot tracker
          <Cup color={blue} />
        </Cell>
        <Divider />
        <Cell $min={56} $gap={9}>
          Lift
          <Cup color="#8a8a8a" />
        </Cell>
        <Divider />
        <Cell $gap={38}>
          <span>Temperature</span>
          <span>==</span>
        </Cell>
      </StatusLine>
    </Status>
  );
}

/* ---------- app ---------- */

const leftTools = [
  ["New instance", <UserAdd />],
  ["Sensor", <MdCamera />],
  ["Open file", <Folder />],
  ["Open folder", <Folder />],
  ["Save", <Floppy />],
  ["Mask", <CropMask />],
  ["Simulation", <PhiEdit />, true],
  ["Alignment", <Target />],
];
const rightTools = [
  ["New", <NewW />],
  ["Save", <SaveW />],
  ["Reset", <ResetIcon />],
  ["Workspaces", <FolderW />, true],
  ["Views", <Monitor />, true],
];

export default function App() {
  return (
    <Shell>
      <Global />
      <TopBar>
        <ToolGroup>
          {leftTools.map(([label, icon, off]) => (
            <ToolButton key={label} disabled={off}>{icon}{label}</ToolButton>
          ))}
        </ToolGroup>
        <ToolGroup>
          {rightTools.map(([label, icon, menu]) => (
            <ToolButton key={label} $wide={!menu}>{icon}{label}{menu && <MenuMark />}</ToolButton>
          ))}
        </ToolGroup>
      </TopBar>

      <Main>
        <SideBar $width={35}>
          <Dots $top />
          <SideButton $pressed $color={grey} aria-label="Run"><Play /></SideButton>
          <SideButton aria-label="Stop"><Stop /></SideButton>
          <SideRule />
          <SideButton $color={grey} aria-label="Snapshot"><MdPhotoCamera /></SideButton>
          <SideButton $color={grey} aria-label="Record"><Cine /></SideButton>
          <SideButton $color={grey} aria-label="Movie"><Film /></SideButton>
          <Dots />
          <SideButton $color={grey} aria-label="Restart"><Reload /></SideButton>
          <SideButton $color={grey} aria-label="Play"><Play /></SideButton>
          <SideButton $color={grey} aria-label="Stop playback"><Stop /></SideButton>
          <SideButton $color={grey} aria-label="Next"><StepNext /></SideButton>
          <SideButton $color={grey} aria-label="Fast forward"><Fast /></SideButton>
        </SideBar>

        <FeatureTree />

        <Desk>
          <DeskRow>
            <Viewport>
              <Watermark viewBox="0 0 400 90" fill="#2d2d2d" aria-hidden="true">
                <path d="M0 60L14 20h20L8 90H0zM78 20h160v90h-22V50H100v40H78zM290 20h22l30 70h-22zM365 20h22l-20 50z" />
              </Watermark>

              <Win $x={0} $y={0} $w={492} $flush aria-label="Intensity">
                <TitleBar icon={<IBeam />} title="Intensity" tight />
                <WinBody $rail>
                  <AutoScale />
                  <IntensityMap />
                  <ChartBlock>
                    <Profile title="origin (0.00, 0.00) - angle (0.00 )" color="#c8281e" data={redCurve} scale={23.5} ticks={[-6, -4, -2, 0, 2, 4, 6]} />
                  </ChartBlock>
                  <ChartBlock>
                    <Profile title="origin (0.00, 0.00) - angle (90.00 )" color="#22c03c" data={greenCurve} scale={31.8} ticks={[-4, -2, 0, 2, 4]} />
                  </ChartBlock>
                  <Measure $h={28} $cols="315px 42px 24px 40px 33px">
                    <Right>Intensity contrast</Right>
                    <Right>0.93</Right>
                    <span />
                    <PairButtons />
                  </Measure>
                </WinBody>
              </Win>

              <Win $x={499} $y={0} $w={500} aria-label="Wavefront">
                <TitleBar icon={<Phi />} title="Wavefront" />
                <WinBody $bottom={3}>
                  <AutoScale />
                  <WavefrontMap />
                  <Measure $cols="182px 129px 1fr"><span /><span>Wavefront PV</span><span>2</span></Measure>
                  <Measure $cols="182px 129px 1fr"><span /><span>Wavefront RMS</span><span>0</span></Measure>
                </WinBody>
              </Win>

              <Frame $x={826} $y={108} $w={591}>
                <FrameInner aria-label="PSF">
                  <TitleBar icon={<Peaks />} title="PSF" tight wideIcon />
                  <WinBody $bottom={3}>
                    <AutoScale />
                    <PsfMap />
                    <Measure $cols="353px 63px 45px 40px 33px">
                      <span />
                      <Right>19.044</Right>
                      <span />
                      <PairButtons />
                    </Measure>
                    <Measure $cols="353px 63px 7px 38px 40px 33px">
                      <Right>Airy diameter</Right>
                      <Right>0.014</Right>
                      <span />
                      <span>mm</span>
                      <PairButtons />
                    </Measure>
                  </WinBody>
                </FrameInner>
              </Frame>

              <ModalWindow />
            </Viewport>
            <ScrollTrack>
              <ArrowButton aria-label="Scroll up"><Triangle dir="up" /></ArrowButton>
              <Slack $size={32} />
              <Thumb $size={764} />
              <Slack $size={22} />
              <ArrowButton aria-label="Scroll down"><Triangle /></ArrowButton>
            </ScrollTrack>
          </DeskRow>
          <ScrollTrack $row>
            <ArrowButton aria-label="Scroll left"><Triangle dir="left" /></ArrowButton>
            <Slack $size={10} />
            <Thumb $row $size={1233} />
            <Slack $size={58} />
            <ArrowButton aria-label="Scroll right"><Triangle dir="right" /></ArrowButton>
            <ArrowButton as="span" />
          </ScrollTrack>
        </Desk>

        <SideBar $width={34}>
          <Dots $top />
          <SideButton $pressed aria-label="Wavefront"><Phi /></SideButton>
          <SideButton aria-label="Settings"><GearWrench /></SideButton>
          <SideButton $pressed aria-label="Intensity"><IBeam /></SideButton>
          <SideButton aria-label="Slopes"><Arrows /></SideButton>
          <SideButton aria-label="Spots grid"><DotGrid /></SideButton>
          <SideButton aria-label="Pupil"><Spots /></SideButton>
          <SideButton $pressed aria-label="Modal coefficients"><McIcon /></SideButton>
          <SideButton $pressed aria-label="PSF"><Peaks /></SideButton>
          <SideButton aria-label="MTF"><Decay /></SideButton>
          <SideButton aria-label="Focus"><Bowtie /></SideButton>
          <SideRule />
          <SideButton aria-label="History"><Stopwatch /></SideButton>
          <SideButton aria-label="Zoom"><Magnifier /></SideButton>
          <Dots />
          <SideButton aria-label="Tile windows"><Tiles /></SideButton>
          <SideButton aria-label="Cascade windows"><Stack /></SideButton>
        </SideBar>
      </Main>

      <StatusBar />
    </Shell>
  );
}
